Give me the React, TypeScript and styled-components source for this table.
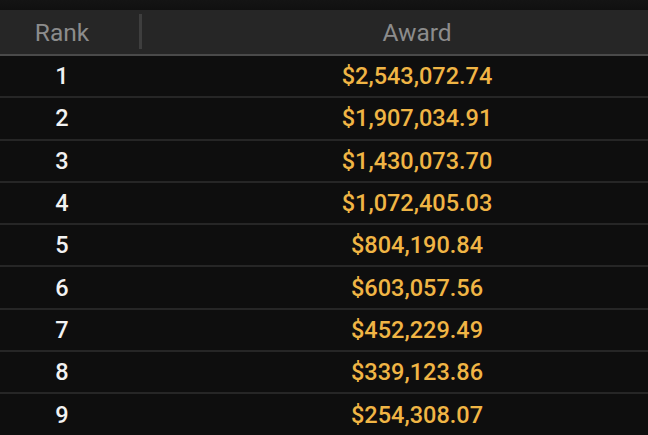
import React from 'react'
import styled, { createGlobalStyle } from 'styled-components'

const GlobalStyle = createGlobalStyle`
  html, body {
    margin: 0;
    padding: 0;
    background: #0d0d0d;
  }
  body {
    font-family: Roboto, "Liberation Sans", sans-serif;
  }
`

const awards = [
  '$2,543,072.74',
  '$1,907,034.91',
  '$1,430,073.70',
  '$1,072,405.03',
  '$804,190.84',
  '$603,057.56',
  '$452,229.49',
  '$339,123.86',
  '$254,308.07',
]

const Page = styled.div`
  width: 648px;
  height: 435px;
  overflow: hidden;
  padding-top: 10px;
  box-sizing: border-box;
  background: linear-gradient(#141414, #101010 10px, #0d0d0d 10px);
`

const HeaderRow = styled.div`
  display: grid;
  grid-template-columns: 142px 1fr;
  height: 44px;
  background: #262626;
  border-bottom: 2px solid #4a4a4a;
`

const HeaderCell = styled.div<{ $padLeft?: number; $padRight?: number }>`
  position: relative;
  display: flex;
  align-items: center;
  justify-content: center;
  padding-left: ${p => p.$padLeft ?? 0}px;
  padding-right: ${p => p.$padRight ?? 0}px;
  font-size: 24.5px;
  color: #8c8c8c;
`

const Handle = styled.span`
  position: absolute;
  right: 0;
  top: 4px;
  bottom: 5px;
  width: 3px;
  background: #3e3e3e;
`

const Row = styled.div`
  display: grid;
  grid-template-columns: 142px 1fr;
  height: 40.3px;
  border-bottom: 2px solid #262626;
  background: #0e0e0e;
`

const RankCell = styled.div`
  display: flex;
  align-items: center;
  justify-content: center;
  padding-right: 18px;
  font-size: 23.5px;
  font-weight: 500;
  color: #f2f2f2;
`

const AwardCell = styled.div`
  display: flex;
  align-items: center;
  justify-content: center;
  padding-left: 44px;
  font-size: 23.5px;
  font-weight: 500;
  color: #f0b545;
`

export default function App() {
  return (
    <>
      <GlobalStyle />
      <Page>
        <HeaderRow>
          <HeaderCell $padRight={18}>
            Rank
            <Handle />
          </HeaderCell>
          <HeaderCell $padLeft={44}>Award</HeaderCell>
        </HeaderRow>
        {awards.map((a, i) => (
          <Row key={a}>
            <RankCell>{i + 1}</RankCell>
            <AwardCell>{a}</AwardCell>
          </Row>
        ))}
      </Page>
    </>
  )
}
